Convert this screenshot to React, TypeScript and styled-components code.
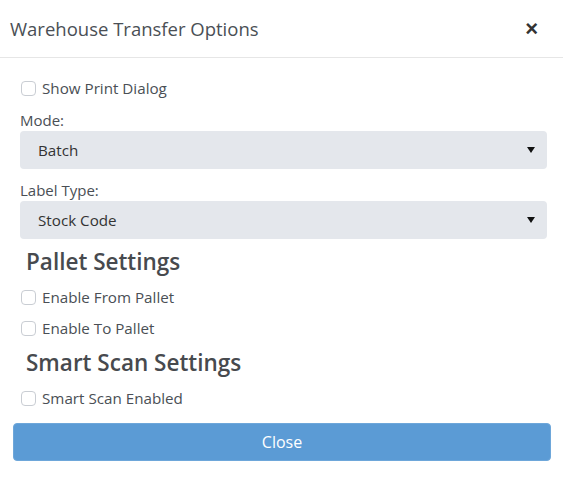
import styled, { createGlobalStyle } from "styled-components";

const GlobalStyle = createGlobalStyle`
  body {
    margin: 0;
    background: #fff;
    font-family: "Open Sans", "Noto Sans", sans-serif;
    color: #495057;
  }
`;

const Modal = styled.div`
  width: 563px;
  height: 485px;
  background: #fff;
  display: flex;
  flex-direction: column;
`;

const Header = styled.div`
  height: 58px;
  box-sizing: border-box;
  border-bottom: 1px solid #e6e6e6;
  display: flex;
  align-items: center;
  justify-content: space-between;
  padding: 0 25px 0 10px;
`;

const Title = styled.h4`
  margin: 0;
  font-size: 18.5px;
  font-weight: 400;
  color: #4a4f55;
`;

const CloseX = styled.button`
  border: none;
  background: none;
  padding: 0;
  font-size: 22px;
  font-weight: 700;
  line-height: 1;
  color: #333;
  cursor: pointer;
`;

const Body = styled.div`
  padding: 20px 16px 0 21px;
  display: flex;
  flex-direction: column;
`;

const CheckRow = styled.label<{ $mb?: number }>`
  display: flex;
  align-items: center;
  height: 20px;
  font-size: 15.2px;
  color: #4a4f55;
  margin-bottom: ${(p) => p.$mb ?? 11}px;
`;

const Box = styled.span`
  box-sizing: border-box;
  width: 15px;
  height: 15px;
  border: 1px solid #c9cdd3;
  border-radius: 4px;
  margin-right: 6px;
  background: #fff;
`;

const FieldLabel = styled.div`
  font-size: 15px;
  color: #4a4f55;
  height: 20px;
  line-height: 20px;
  margin: 0 0 1px -1px;
`;

const Select = styled.div<{ $mb?: number }>`
  height: 38px;
  margin-left: -1px;
  border-radius: 4px;
  background: #e4e7ec;
  display: flex;
  align-items: center;
  justify-content: space-between;
  padding: 0 12px 0 18px;
  font-size: 15.2px;
  color: #333;
  margin-bottom: ${(p) => p.$mb ?? 11}px;
`;

const Caret = styled.span`
  width: 0;
  height: 0;
  border-left: 4px solid transparent;
  border-right: 4px solid transparent;
  border-top: 6px solid #111;
`;

const Heading = styled.h3`
  margin: 0 0 10px 5px;
  font-size: 22.5px;
  font-weight: 600;
  color: #474a4e;
  height: 30px;
  line-height: 30px;
`;

const Footer = styled.div`
  padding: 0 12px 0 13px;
`;

const Button = styled.button`
  width: 100%;
  height: 38px;
  border: 1px solid #6ea7da;
  border-radius: 4px;
  background: #5b9bd5;
  color: #fff;
  font-family: inherit;
  font-size: 16px;
`;

function Check({ label, mb }: { label: string; mb?: number }) {
  return (
    <CheckRow $mb={mb}>
      <Box />
      {label}
    </CheckRow>
  );
}

export default function App() {
  return (
    <>
      <GlobalStyle />
      <Modal>
        <Header>
          <Title>Warehouse Transfer Options</Title>
          <CloseX>×</CloseX>
        </Header>
        <Body>
          <Check label="Show Print Dialog" mb={12} />
          <FieldLabel>Mode:</FieldLabel>
          <Select>
            Batch
            <Caret />
          </Select>
          <FieldLabel>Label Type:</FieldLabel>
          <Select $mb={8}>
            Stock Code
            <Caret />
          </Select>
          <Heading>Pallet Settings</Heading>
          <Check label="Enable From Pallet" />
          <Check label="Enable To Pallet" mb={10} />
          <Heading>Smart Scan Settings</Heading>
          <Check label="Smart Scan Enabled" mb={15} />
        </Body>
        <Footer>
          <Button>Close</Button>
        </Footer>
      </Modal>
    </>
  );
}
